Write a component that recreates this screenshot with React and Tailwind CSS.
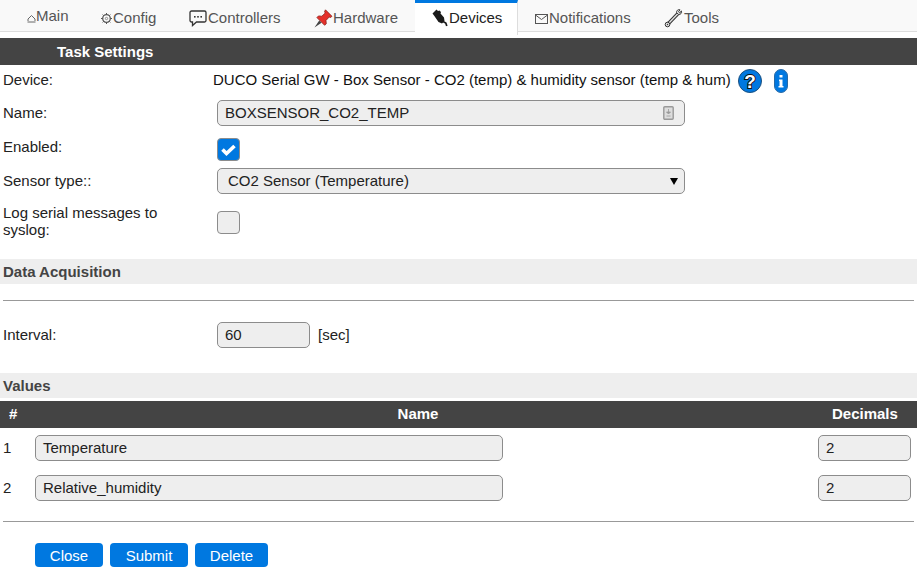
import React from "react";

const font = "font-['Liberation_Sans',Arial,sans-serif]";

const HomeIcon = () => (
  <svg width="9" height="9" viewBox="0 0 9 9" fill="none" stroke="#666" strokeWidth="1">
    <path d="M1 7V5L4.500 1.500 8 5v2M.5 8h8" />
  </svg>
);

const GearIcon = () => (
  <svg width="13" height="13" viewBox="0 0 13 13" fill="none" stroke="#555" strokeWidth="1">
    <circle cx="6.500" cy="6.500" r="3.800" strokeWidth="1.300" />
    <circle cx="6.500" cy="6.500" r="1.200" strokeWidth=".6" />
    <path d="M6.500 1v1.500M6.500 10.500V12M1 6.500h1.500M10.500 6.500H12M2.600 2.600l1 1M9.400 9.400l1 1M10.400 2.600l-1 1M3.600 9.400l-1 1" />
  </svg>
);

const ChatIcon = () => (
  <svg width="19" height="17" viewBox="0 0 19 17" fill="none">
    <path d="M2.500 1h13A1.500 1.500 0 0 1 17 2.500v8a1.500 1.500 0 0 1-1.500 1.500H7.500L3.500 15.500V12h-1A1.500 1.500 0 0 1 1 10.500v-8A1.500 1.500 0 0 1 2.500 1Z" stroke="#333" strokeWidth="1.300" />
    <rect x="5" y="6" width="1.600" height="1.600" fill="#333" />
    <rect x="8.200" y="6" width="1.600" height="1.600" fill="#333" />
    <rect x="11.400" y="6" width="1.600" height="1.600" fill="#333" />
  </svg>
);

const PinIcon = () => (
  <svg width="19" height="19" viewBox="0 0 19 19">
    <path d="M11.500 .8 18 7.300 16.500 8.500 15.200 8 12 11.500 12.300 14.800 10.600 16.300 2.900 8.600 4.500 6.900 7.800 7.200 11.200 4 10.500 2.500Z" fill="#e4312b" stroke="#7c1a16" strokeWidth=".7" />
    <path d="M5.200 11.500 .5 18.500l7-4.700Z" fill="#444" />
  </svg>
);

const PlugIcon = () => (
  <svg width="17" height="18" viewBox="0 0 17 18" fill="none">
    <path d="M.5 4.500 4.500.5 6 2 7.500 1.500 9 3l-.5 1.500 3.500 4 .5 3.500-2.500 2.500-3.500-1.500L2 6.500Z" fill="#1a1a1a" />
    <path d="M11 12.500l2.800 1.500 1 3" stroke="#1a1a1a" strokeWidth="1.700" />
  </svg>
);

const MailIcon = () => (
  <svg className="mr-px" width="13" height="10" viewBox="0 0 13 10" fill="none" stroke="#555" strokeWidth="1">
    <rect x=".5" y=".5" width="12" height="9" />
    <path d="M.5 1 6.500 5.500 12.500 1" />
  </svg>
);

const WrenchIcon = () => (
  <svg width="20" height="19" viewBox="0 0 20 19" fill="none">
    <path d="M3.500 15.500 14.500 4" stroke="#333" strokeWidth="3.400" />
    <path d="M3.500 15.500 14.500 4" stroke="#e2e2e2" strokeWidth="1.400" />
    <path d="M17.300 1.800 15.800 4 14.500 2.800 16 .8a2.500 2.500 0 0 0-3.400 2.800l1.800 1.800a2.500 2.500 0 0 0 2.900-3.600Z" fill="#e2e2e2" stroke="#333" strokeWidth=".9" />
    <circle cx="3.500" cy="15.500" r="2.300" fill="#e2e2e2" stroke="#333" strokeWidth="1" />
    <circle cx="3.500" cy="15.500" r=".7" fill="#333" />
  </svg>
);

const tabs = [
  { label: "Main", icon: <HomeIcon />, w: "w-[73px]", up: true },
  { label: "Config", icon: <GearIcon />, w: "w-[89px]" },
  { label: "Controllers", icon: <ChatIcon />, w: "w-[125px]" },
  { label: "Hardware", icon: <PinIcon />, w: "w-[118px]" },
  { label: "Devices", icon: <PlugIcon />, w: "w-[103px]", active: true },
  { label: "Notifications", icon: <MailIcon />, w: "w-[129px]" },
  { label: "Tools", icon: <WrenchIcon />, w: "w-[90px]" },
];

const Row = ({ label, className = "", children }) => (
  <div className={`flex ${className}`}>
    <div className="w-[217px] -translate-y-px pl-[3px] pr-[50px] text-[15px] leading-[17px] text-[#222]">{label}</div>
    <div className="flex-1">{children}</div>
  </div>
);

const inputClass =
  "h-[26px] rounded-[5px] border border-[#8c8c8c] bg-[#eeeeee] text-[15px] text-[#222] flex items-center";

const Band = ({ children }) => (
  <div className="h-[25px] bg-[#eeeeee] pl-[3px] text-[15px] font-bold leading-[25px] text-[#444]">{children}</div>
);

const Button = ({ children, w }) => (
  <button className={`${w} h-[24px] rounded-[4px] bg-[#0078e0] pt-px text-[15px] leading-[24px] text-white`}>{children}</button>
);

export default function App() {
  return (
    <div className={`${font} h-[580px] w-[917px] overflow-hidden bg-white`}>
      {/* Tabs */}
      <div className="h-[32px] border-b border-[#dddddd] bg-[#f9f9f9] pl-[10px]">
        <div className="flex">
          {tabs.map((t) => (
            <div
              key={t.label}
              className={`flex items-center pl-[17px] text-[15px] ${t.w} ${
                t.active
                  ? "h-[35px] border-t-[3px] border-r border-[#0078e0] border-r-[#dddddd] bg-white pb-[2px] text-[#222]"
                  : "h-[31px] pt-[6px] text-[#555]"
              }`}
            >
              {t.icon}
              <span className={t.up ? "-translate-y-[2px]" : ""}>{t.label}</span>
            </div>
          ))}
        </div>
      </div>

      {/* Task settings */}
      <div className="mt-[6px] h-[27px] bg-[#444444] pl-[57px] text-[15px] font-bold leading-[27px] text-white">Task Settings</div>

      <div className="flex h-[35px] items-center pb-[4px]">
        <div className="w-[213px] pl-[3px] text-[15px] leading-[17px] text-[#222] -translate-y-[1px]">Device:</div>
        <span className="text-[15px] text-[#111]">DUCO Serial GW - Box Sensor - CO2 (temp) &amp; humidity sensor (temp &amp; hum)</span>
        <svg className="ml-[7px]" width="24" height="24" viewBox="0 0 24 24">
          <circle cx="12" cy="12" r="11.500" fill="#0078e0" stroke="#1c4f7c" />
          <text x="12" y="18.500" textAnchor="middle" fontSize="19" fontWeight="bold" fill="#fff" stroke="#111" strokeWidth="2" paintOrder="stroke">?</text>
        </svg>
        <svg className="ml-[12px]" width="14" height="24" viewBox="0 0 14 24">
          <rect x=".5" y=".5" width="13" height="23" rx="6.500" fill="#0078e0" stroke="#2a6aa5" />
          <rect x="5.500" y="6" width="3" height="2.500" fill="#fff" />
          <path d="M5 10.500h3.500v6.500h1v1.500h-5V17h1v-5h-.5Z" fill="#fff" />
        </svg>
      </div>

      <Row label="Name:" className="items-center">
        <div className={`${inputClass} w-[468px] justify-between pl-[7px] pr-[10px]`}>
          <span>BOXSENSOR_CO2_TEMP</span>
          <svg width="11" height="14" viewBox="0 0 11 14">
            <rect x=".8" y=".8" width="9.400" height="12.400" rx="1" fill="#ddd" stroke="#999" strokeWidth="1.400" />
            <path d="M5.500 3v4M3.500 6h4L5.500 8ZM3.500 10h4" stroke="#999" fill="#999" strokeWidth=".8" />
          </svg>
        </div>
      </Row>

      <Row label={<span className="relative -top-[2px]">Enabled:</span>} className="mt-[12px] items-center">
        <div className="flex h-[23px] w-[23px] items-center justify-center rounded-[4px] border border-[#8c8c8c] bg-[#0078e0]">
          <svg width="15" height="12" viewBox="0 0 15 12" fill="none" stroke="#fff" strokeWidth="3.600">
            <path d="M1.500 5.500l4 4L13.500 2" />
          </svg>
        </div>
      </Row>

      <Row label="Sensor type::" className="mt-[7px] items-center">
        <div className={`${inputClass} w-[468px] justify-between pl-[10px] pr-[6px]`}>
          <span>CO2 Sensor (Temperature)</span>
          <span className="h-0 w-0 border-x-[4px] border-t-[7px] border-x-transparent border-t-black" />
        </div>
      </Row>

      <Row label="Log serial messages to syslog:" className="mt-[11px] items-center">
        <div className="h-[23px] w-[23px] rounded-[4px] border border-[#8c8c8c] bg-[#eeeeee]" />
      </Row>

      <div className="mt-[20px]">
        <Band>Data Acquisition</Band>
      </div>
      <div className="mx-[3px] mt-[16px] h-px bg-[#999999]" />

      <Row label="Interval:" className="mt-[21px] items-center">
        <div className="flex items-center">
          <div className={`${inputClass} w-[93px] pl-[7px]`}>60</div>
          <span className="ml-[8px] text-[15px] text-[#222]">[sec]</span>
        </div>
      </Row>

      <div className="mt-[25px]">
        <Band>Values</Band>
      </div>

      {/* Values table */}
      <div className="mt-[3px] grid grid-cols-[35px_1fr_103px]">
        <div className="flex h-[27px] items-center bg-[#444444] pl-[9px] text-[15px] font-bold text-white">#</div>
        <div className="flex h-[27px] items-center justify-center bg-[#444444] pr-[13px] text-[15px] font-bold text-white">Name</div>
        <div className="flex h-[27px] items-center bg-[#444444] pl-[18px] text-[15px] font-bold text-white">Decimals</div>

        {[
          ["1", "Temperature"],
          ["2", "Relative_humidity"],
        ].map(([n, name], i) => (
          <React.Fragment key={n}>
            <div className={`flex h-[26px] items-center pl-[3px] text-[15px] text-[#222] ${i === 0 ? "mt-[7px]" : "mt-[14px]"}`}>{n}</div>
            <div className={i === 0 ? "mt-[7px]" : "mt-[14px]"}>
              <div className={`${inputClass} w-[468px] pl-[7px]`}>{name}</div>
            </div>
            <div className={i === 0 ? "mt-[7px]" : "mt-[14px]"}>
              <div className={`${inputClass} ml-[4px] w-[93px] pl-[7px]`}>2</div>
            </div>
          </React.Fragment>
        ))}
      </div>

      <div className="mx-[3px] mt-[20px] h-px bg-[#999999]" />

      <div className="mt-[21px] flex gap-[7px] pl-[35px]">
        <Button w="w-[68px]">Close</Button>
        <Button w="w-[78px]">Submit</Button>
        <Button w="w-[73px]">Delete</Button>
      </div>
    </div>
  );
}
